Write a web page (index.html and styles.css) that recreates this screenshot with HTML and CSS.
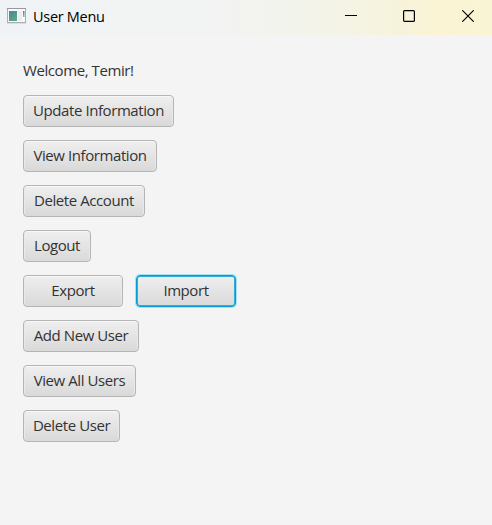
FILE: index.html
```html
<!DOCTYPE html>
<html lang="en">
<head>
<meta charset="utf-8">
<title>User Menu</title>
<link rel="stylesheet" href="styles.css">
</head>
<body>
<div class="window">
  <header class="titlebar">
    <svg class="app-icon" width="19" height="16" viewBox="0 0 19 16">
      <defs>
        <linearGradient id="pane" x1="0" y1="0" x2="0.6" y2="1">
          <stop offset="0" stop-color="#4a83a0"/>
          <stop offset="1" stop-color="#5aa685"/>
        </linearGradient>
        <linearGradient id="side" x1="0" y1="0" x2="0" y2="1">
          <stop offset="0" stop-color="#4a78b0"/>
          <stop offset="1" stop-color="#78c49a"/>
        </linearGradient>
      </defs>
      <rect x="0.5" y="0.5" width="18" height="14" fill="#fafafa" stroke="#abaeb8"/>
      <path d="M0 0.5h19" stroke="#9398a3"/>
      <path d="M0 15.5h19" stroke="#dadcdf"/>
      <rect x="2" y="3" width="8" height="10" fill="url(#pane)"/>
      <rect x="11" y="3" width="4" height="10" fill="#ededee"/>
      <rect x="16" y="3" width="1.5" height="6" fill="url(#side)"/>
    </svg>
    <h1 class="title">User Menu</h1>
    <div class="controls">
      <svg width="12" height="12" viewBox="0 0 12 12"><path d="M0 5.5h12" stroke="#000"/></svg>
      <svg width="12" height="12" viewBox="0 0 12 12"><rect x="0.6" y="0.6" width="10.8" height="10.8" rx="1" fill="none" stroke="#000" stroke-width="1.2"/></svg>
      <svg width="12" height="12" viewBox="0 0 12 12"><path d="M0.3 0.3l11.4 11.4M11.7 0.3L0.3 11.7" stroke="#000" stroke-width="1.15"/></svg>
    </div>
  </header>
  <main class="menu">
    <p class="welcome">Welcome, Temir!</p>
    <button class="btn update">Update Information</button>
    <button class="btn view">View Information</button>
    <button class="btn remove">Delete Account</button>
    <button class="btn logout">Logout</button>
    <div class="row">
      <button class="btn transfer">Export</button>
      <button class="btn transfer focused">Import</button>
    </div>
    <button class="btn add-user">Add New User</button>
    <button class="btn all-users">View All Users</button>
    <button class="btn delete-user">Delete User</button>
  </main>
</div>
</body>
</html>
```
FILE: styles.css
```css
* { box-sizing: border-box; }

body {
  margin: 0;
  background: #f4f4f4;
  color: #333;
  font: 15px/20px "Open Sans", "Noto Sans", sans-serif;
}

.window { height: 525px; overflow: hidden; }

.titlebar {
  display: flex;
  align-items: flex-start;
  height: 35px;
  padding: 8px 18px 0 7px;
  background: linear-gradient(90deg, #f0f3f6 0, #f2f3f2 45%, #f3f3e9 65%, #f6f3dd 80%, #faf3d5 88%, #f9f5d3 100%);
}

.app-icon { flex: none; }

.title {
  margin: -1px 0 0 7px;
  color: #000;
  font-size: 14.5px;
  font-weight: 400;
  line-height: 20px;
  letter-spacing: -0.3px;
}

.controls {
  display: flex;
  gap: 46px;
  margin: 2px 0 0 auto;
}

.controls svg { display: block; }

.controls svg:last-child { margin-left: 1px; }

.menu {
  display: flex;
  flex-direction: column;
  align-items: flex-start;
  gap: 13px;
  padding: 25px 23px 0;
}

.welcome {
  height: 22px;
  margin: 0;
  letter-spacing: -0.42px;
  white-space: nowrap;
}

.row { display: flex; gap: 13px; }

.btn {
  height: 32px;
  padding: 0 0 2px;
  border: 1px solid #b5b5b5;
  border-radius: 4px;
  background: linear-gradient(#efefef, #d9d9d9);
  box-shadow: inset 0 1px #f8f8f8, inset 1px 0 #e9e9e9, inset -1px 0 #e9e9e9;
  color: #333;
  font: inherit;
  letter-spacing: -0.42px;
  white-space: nowrap;
}

.update { width: 151px; }
.view { width: 134px; }
.remove { width: 122px; }
.logout { width: 68px; }
.transfer { width: 100px; }
.add-user { width: 116px; }
.all-users { width: 113px; }
.delete-user { width: 97px; }

.focused {
  border-color: #039ed3;
  box-shadow: 0 0 0 1px #a9dff0, inset 0 0 0 0.5px #039ed3, inset 0 0 0 1px #5fc0e0;
}
```
